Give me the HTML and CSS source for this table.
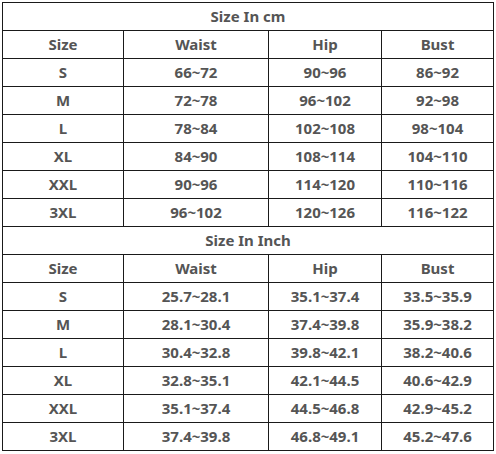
FILE: index.html
```html
<!DOCTYPE html>
<html>
<head>
<meta charset="utf-8">
<link rel="stylesheet" href="styles.css">
</head>
<body>
<table class="chart">
  <colgroup>
    <col class="c1"><col class="c2"><col class="c3"><col class="c4">
  </colgroup>
  <tr><td colspan="4">Size In cm</td></tr>
  <tr><td>Size</td><td>Waist</td><td>Hip</td><td>Bust</td></tr>
  <tr><td>S</td><td>66~72</td><td>90~96</td><td>86~92</td></tr>
  <tr><td>M</td><td>72~78</td><td>96~102</td><td>92~98</td></tr>
  <tr><td>L</td><td>78~84</td><td>102~108</td><td>98~104</td></tr>
  <tr><td>XL</td><td>84~90</td><td>108~114</td><td>104~110</td></tr>
  <tr><td>XXL</td><td>90~96</td><td>114~120</td><td>110~116</td></tr>
  <tr><td>3XL</td><td>96~102</td><td>120~126</td><td>116~122</td></tr>
  <tr><td colspan="4">Size In Inch</td></tr>
  <tr><td>Size</td><td>Waist</td><td>Hip</td><td>Bust</td></tr>
  <tr><td>S</td><td>25.7~28.1</td><td>35.1~37.4</td><td>33.5~35.9</td></tr>
  <tr><td>M</td><td>28.1~30.4</td><td>37.4~39.8</td><td>35.9~38.2</td></tr>
  <tr><td>L</td><td>30.4~32.8</td><td>39.8~42.1</td><td>38.2~40.6</td></tr>
  <tr><td>XL</td><td>32.8~35.1</td><td>42.1~44.5</td><td>40.6~42.9</td></tr>
  <tr><td>XXL</td><td>35.1~37.4</td><td>44.5~46.8</td><td>42.9~45.2</td></tr>
  <tr><td>3XL</td><td>37.4~39.8</td><td>46.8~49.1</td><td>45.2~47.6</td></tr>
</table>
</body>
</html>
```
FILE: styles.css
```css
html, body {
  margin: 0;
  padding: 0;
  background: #fff;
}
body {
  padding: 2px 0 0 2px;
}
.chart {
  border-collapse: collapse;
  table-layout: fixed;
  width: 491px;
  font-family: "Noto Sans", "Open Sans", sans-serif;
  font-weight: bold;
  font-size: 15px;
  color: #555;
}
.c1 { width: 121px; }
.c2 { width: 145px; }
.c3 { width: 113px; }
.c4 { width: 112px; }
.chart td {
  border: 1px solid #1a1a1a;
  height: 27px;
  padding: 0;
  text-align: center;
  vertical-align: middle;
  line-height: 27px;
}
```
